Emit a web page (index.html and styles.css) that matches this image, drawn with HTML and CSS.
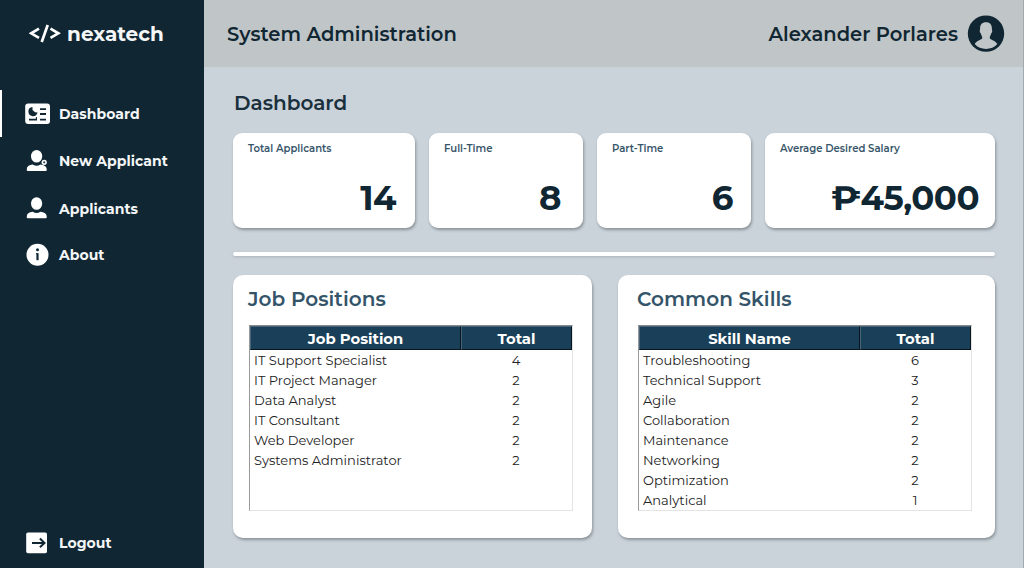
FILE: index.html
```html
<!DOCTYPE html>
<html lang="en">
<head>
<meta charset="utf-8">
<title>nexatech – Dashboard</title>
<link rel="stylesheet" href="styles.css">
</head>
<body>
<div class="app">
  <aside class="sidebar">
    <div class="brand">
      <svg class="brand-mark" viewBox="0 0 32 20" width="32" height="20"><path d="M10 4.700 L2.200 9.300 L10 13.800 M21.500 4.700 L29.300 9.300 L21.500 13.800" /><path d="M12.700 18 L18.700 1"/></svg>
      <span class="brand-name">nexatech</span>
    </div>
    <nav class="menu">
      <a class="item active"><svg class="icon" viewBox="0 0 26 24" width="26" height="24"><rect x="0.200" y="1.500" width="24.800" height="20.600" rx="3" fill="#fff"/><path d="M7.500 5A4.600 4.600 0 1 0 12.500 10.500L10 10.300 7.500 8z" fill="#102733"/><path d="M15 7.200h6M15 12h6M15 17.600h6M4 17.600h8" stroke="#102733" stroke-width="1.800" fill="none"/><path d="M11.400 17v-2" stroke="#102733" fill="none"/></svg><span>Dashboard</span></a>
      <a class="item"><svg class="icon" viewBox="0 0 26 24" width="26" height="24"><ellipse cx="11.600" cy="7.200" rx="5.600" ry="6.300" fill="#fff"/><path d="M1.800 21.500v-1.500q0-3.600 6-4.500 3.800 2.600 7.600 0 6 .9 6.300 4.500v1.500q0 .4-1 .4H2.800q-1 0-1-.4z" fill="#fff"/><circle cx="19.200" cy="13.300" r="1.900" fill="#40525c" stroke="#fff" stroke-width="1.500"/></svg><span>New Applicant</span></a>
      <a class="item"><svg class="icon" viewBox="0 0 26 24" width="26" height="24"><ellipse cx="11.600" cy="7.500" rx="5.600" ry="6.300" fill="#fff"/><path d="M1.800 21.800v-1.500q0-3.600 6-4.500 3.800 2.600 7.600 0 6 .9 6.300 4.500v1.500q0 .4-1 .4H2.800q-1 0-1-.4z" fill="#fff"/></svg><span class="low">Applicants</span></a>
      <a class="item"><svg class="icon" viewBox="0 0 26 24" width="26" height="24"><circle cx="12.500" cy="11.700" r="11" fill="#fff"/><circle cx="12.500" cy="6.800" r="1.500" fill="#102733"/><path d="M12.500 10.200v7" stroke="#102733" stroke-width="2.200" fill="none"/><path d="M11 10.700h1.500" stroke="#102733" fill="none"/></svg><span>About</span></a>
    </nav>
    <a class="item logout"><svg class="icon" viewBox="0 0 26 24" width="26" height="24"><rect x="1.200" y="1.500" width="20.800" height="20.800" rx="1.800" fill="#fff"/><path d="M7 11.900h12.500M14.900 7.600l4.600 4.300-4.600 4.300" stroke="#102733" stroke-width="2" fill="none"/></svg><span>Logout</span></a>
  </aside>

  <main class="main">
    <header class="topbar">
      <span class="system">System Administration</span>
      <div class="user">
        <span class="user-name">Alexander Porlares</span>
        <svg class="avatar" viewBox="0 0 38 38" width="38" height="38"><circle cx="19" cy="18.600" r="18.200" fill="#102733"/><path d="M19 7.300c4.200 0 5.900 2.700 5.900 6.200 0 1.400.4 1.500.3 3-.1 1.100-.8 1.500-1.200 2.400-.4 1.400-1 2.200-1.200 3v1.300c.2 1.600 6 2.300 7.500 5.900C27.500 32.500 23.400 34 19 34S10.500 32.500 7.700 29.100c1.500-3.600 7.300-4.300 7.500-5.900v-1.300c-.2-.8-.8-1.600-1.200-3-.4-.9-1.100-1.300-1.200-2.400-.1-1.500.3-1.600.3-3 0-3.500 1.700-6.200 5.900-6.200z" fill="#c0c5c7"/></svg>
      </div>
    </header>
    <section class="content">
      <h1 class="page-title">Dashboard</h1>
      <div class="stats">
        <div class="card"><span class="label">Total Applicants</span><span class="value">14</span></div>
        <div class="card"><span class="label">Full-Time</span><span class="value">8</span></div>
        <div class="card"><span class="label">Part-Time</span><span class="value">6</span></div>
        <div class="card"><span class="label">Average Desired Salary</span><span class="value">₱45,000</span></div>
      </div>
      <div class="divider"></div>
      <div class="panels">
        <section class="panel">
          <h2>Job Positions</h2>
          <div class="grid jobs">
            <div class="row head"><span>Job Position</span><span>Total</span></div>
            <div class="row"><span>IT Support Specialist</span><span>4</span></div>
            <div class="row"><span>IT Project Manager</span><span>2</span></div>
            <div class="row"><span>Data Analyst</span><span>2</span></div>
            <div class="row"><span>IT Consultant</span><span>2</span></div>
            <div class="row"><span>Web Developer</span><span>2</span></div>
            <div class="row"><span>Systems Administrator</span><span>2</span></div>
          </div>
        </section>
        <section class="panel panel-skills">
          <h2>Common Skills</h2>
          <div class="grid skills">
            <div class="row head"><span>Skill Name</span><span>Total</span></div>
            <div class="row"><span>Troubleshooting</span><span>6</span></div>
            <div class="row"><span>Technical Support</span><span>3</span></div>
            <div class="row"><span>Agile</span><span>2</span></div>
            <div class="row"><span>Collaboration</span><span>2</span></div>
            <div class="row"><span>Maintenance</span><span>2</span></div>
            <div class="row"><span>Networking</span><span>2</span></div>
            <div class="row"><span>Optimization</span><span>2</span></div>
            <div class="row"><span>Analytical</span><span>1</span></div>
          </div>
        </section>
      </div>
    </section>
  </main>
</div>
</body>
</html>
```
FILE: styles.css
```css
* { box-sizing: border-box; }
body { margin: 0; font-family: Montserrat, Inter, "Liberation Sans", sans-serif; color: #102733; }
.app { display: flex; width: 1024px; height: 568px; overflow: hidden; white-space: nowrap; }

.sidebar { width: 204px; flex: none; background: #102733; color: #f4f6f7; display: flex; flex-direction: column; }
.brand { display: flex; align-items: center; height: 67px; padding-left: 29px; gap: 6px; }
.brand-mark { fill: none; stroke: #fff; stroke-width: 2.7; }
.brand-name { font-size: 20px; font-weight: 700; }
.menu { display: flex; flex-direction: column; padding-top: 23px; }
.item { display: flex; align-items: center; gap: 8px; height: 47px; padding-left: 25px; font-size: 14px; font-weight: 700; letter-spacing: .05px; }
.item.active { border-left: 2px solid #fff; padding-left: 23px; }
.icon { flex: none; }
.low { padding-top: 2px; }
.logout { margin-top: auto; margin-bottom: 2px; }

.main { flex: 1; background: #cbd3da; border-right: 1px solid #a3aaad; }
.topbar { height: 67px; background: #c0c5c7; display: flex; align-items: center; justify-content: space-between; padding: 0 18px 0 23px; font-size: 19.5px; font-weight: 600; }
.user { display: flex; align-items: center; gap: 9px; }
.content { padding: 0 28px 0 29px; }
.page-title { margin: 0; padding: 24px 0 0 1px; height: 65.5px; font-size: 20px; line-height: 24px; font-weight: 600; color: #1a303d; }

.stats { display: grid; grid-template-columns: 182px 154px 154px 230px; gap: 14px; }
.card { height: 95.5px; padding: 9.500px 16px 0 15px; background: #fff; border-radius: 9px; box-shadow: 1px 2px 3px #8b9499; display: flex; flex-direction: column; }
.card:nth-child(1) { padding-right: 19px; }
.card:nth-child(2) { padding-right: 22px; }
.card:nth-child(3) { padding-right: 18px; }
.label { font-size: 10.1px; line-height: 14px; font-weight: 600; color: #38566a; }
.value { margin-top: 20.5px; text-align: right; font-size: 34px; line-height: 42px; font-weight: 700; letter-spacing: -.5px; }
.divider { height: 4px; margin-top: 24px; background: #fff; border-radius: 2px; box-shadow: 0 1px 3px #aab2b7; }

.panels { display: grid; grid-template-columns: 359px 377px; justify-content: space-between; margin-top: 19px; }
.panel { height: 263px; padding: 12px 0 0 15px; background: #fff; border-radius: 10px; box-shadow: 1px 2px 3px #8b9499; }
.panel-skills { padding-left: 19px; }
.panel h2 { margin: 0 0 14px; font-size: 20px; line-height: 24px; font-weight: 600; color: #345469; letter-spacing: .05px; }
.grid { height: 186px; margin-left: 1px; border: 1px solid #e3e3e3; border-left-color: #999; border-top-color: #888; color: #222; font-size: 13px; }
.jobs { width: 324px; }
.skills { width: 334px; }
.row { display: grid; height: 20px; line-height: 21px; }
.jobs .row { grid-template-columns: 211px 111px; }
.skills .row { grid-template-columns: 221px 111px; }
.row span { padding-left: 4px; }
.row span + span { padding: 0 1px 0 0; text-align: center; }
.row.head { height: 24px; background: #1a4059; color: #fff; font-size: 14.8px; font-weight: 700; }
.head span, .head span + span { padding: 0; text-align: center; border: 1px solid #09141c; border-top-color: #47657a; border-left-color: #47657a; line-height: 24px; height: 24px; }
```
